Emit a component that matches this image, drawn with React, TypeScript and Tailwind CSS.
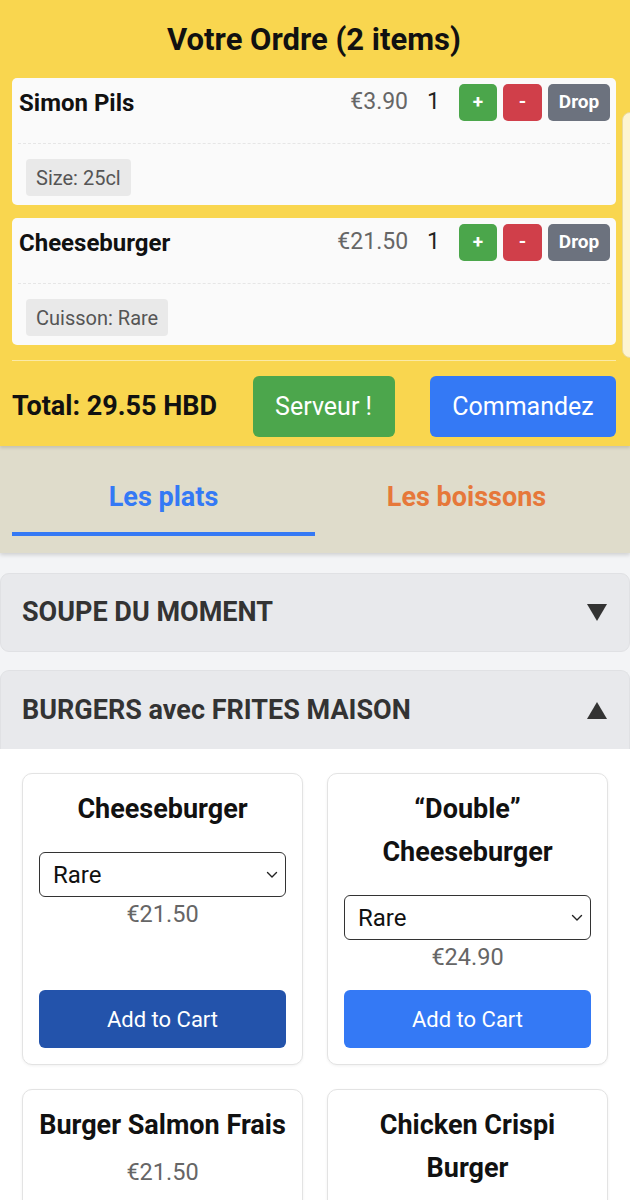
import React, { useState } from 'react';

type OrderItem = { name: string; price: string; qty: number; option: string };

const orderItems: OrderItem[] = [
  { name: 'Simon Pils', price: '€3.90', qty: 1, option: 'Size: 25cl' },
  { name: 'Cheeseburger', price: '€21.50', qty: 1, option: 'Cuisson: Rare' },
];

type Dish = { name: React.ReactNode; price: string; select?: boolean; active?: boolean };

const dishes: Dish[] = [
  { name: 'Cheeseburger', price: '€21.50', select: true, active: true },
  { name: <>“Double”<br />Cheeseburger</>, price: '€24.90', select: true },
  { name: 'Burger Salmon Frais', price: '€21.50' },
  { name: <>Chicken Crispi<br />Burger</>, price: '€21.50' },
];

const Chevron = () => (
  <svg className="pointer-events-none absolute right-[8px] top-1/2 -translate-y-1/2" width="12" height="8" viewBox="0 0 12 8" fill="none">
    <path d="M1.5 1.5 L6 6 L10.5 1.5" stroke="#222" strokeWidth="1.4" strokeLinecap="round" strokeLinejoin="round" />
  </svg>
);

const Triangle = ({ up }: { up?: boolean }) => (
  <svg width="20" height="17" viewBox="0 0 20 17">
    <path d={up ? 'M10 0 L20 17 L0 17 Z' : 'M0 0 L20 0 L10 17 Z'} fill="#333" />
  </svg>
);

const App: React.FC = () => {
  const [tab, setTab] = useState<'plats' | 'boissons'>('plats');

  return (
    <div className="relative min-h-[1200px] overflow-hidden bg-[#f3f4f6] text-[#111]" style={{ fontFamily: 'Roboto, "Noto Sans", sans-serif' }}>
      {/* Order panel */}
      <div className="relative z-10 bg-[#f9d64f] pb-[9px] pl-[12px] pr-[14px] shadow-[0_2px_3px_rgba(0,0,0,0.12)]">
        <h1 className="flex h-[78px] items-center justify-center pt-[2px] text-[31px] font-bold">Votre Ordre (2 items)</h1>

        <div className="flex flex-col gap-[13px]">
          {orderItems.map((item) => (
            <div key={item.name} className="rounded-[5px] bg-[#fafafa] px-[6px] pb-[9px] pt-[6px]">
              <div className="flex h-[37px] items-center">
                <span className="flex-1 pl-[1px] text-[24px] font-bold">{item.name}</span>
                <span className="text-[23px] text-[#666]">{item.price}</span>
                <span className="ml-[19px] mr-[19px] text-[23px] text-[#222]">{item.qty}</span>
                <div className="flex gap-[6px]">
                  <button className="flex h-[37px] w-[38px] items-center justify-center rounded-[5px] bg-[#4ba64b] text-[19px] font-bold text-white">+</button>
                  <button className="flex h-[37px] w-[39px] items-center justify-center rounded-[5px] bg-[#d03f4a] text-[19px] font-bold text-white">-</button>
                  <button className="flex h-[37px] w-[62px] items-center justify-center rounded-[5px] bg-[#6c727e] text-[19px] font-bold text-white">Drop</button>
                </div>
              </div>
              <div className="mt-[22px] border-t border-dashed border-[#e6e6e6]" />
              <div className="ml-[8px] mt-[15px] inline-flex h-[37px] items-center rounded-[4px] bg-[#e9e9e9] px-[10px] text-[20px] text-[#555]">
                {item.option}
              </div>
            </div>
          ))}
        </div>

        <div className="mt-[15px] border-t border-[#fbeaa6]" />

        <div className="flex items-center justify-between pt-[15px]">
          <span className="text-[27px] font-bold">Total: 29.55 HBD</span>
          <button className="h-[61px] w-[142px] rounded-[6px] bg-[#4ca64c] text-[25px] text-white">Serveur !</button>
          <button className="h-[61px] w-[186px] rounded-[6px] bg-[#3479f5] text-[25px] text-white">Commandez</button>
        </div>

        {/* partially visible side panel */}
        <div className="absolute right-[-20px] top-[112px] h-[246px] w-[28px] rounded-[8px] border border-[#e8d9a0] bg-[#fdf4d2]" />
      </div>

      {/* Tabs */}
      <div className="relative z-[5] flex bg-[#dfdccb] px-[12px] shadow-[0_2px_4px_rgba(0,0,0,0.15)]">
        <button onClick={() => setTab('plats')} className="flex h-[107px] flex-1 flex-col items-center">
          <span className="mt-[35px] text-[27px] font-bold leading-[32px] text-[#3479f5]">Les plats</span>
          {tab === 'plats' && <span className="mt-[19px] h-[4px] w-full bg-[#3479f5]" />}
        </button>
        <button onClick={() => setTab('boissons')} className="flex h-[107px] flex-1 flex-col items-center">
          <span className="mt-[35px] text-[27px] font-bold leading-[32px] text-[#e6783a]">Les boissons</span>
          {tab === 'boissons' && <span className="mt-[19px] h-[4px] w-full bg-[#e6783a]" />}
        </button>
      </div>

      {/* Accordions */}
      <div className="pt-[20px]">
        <div className="flex h-[79px] items-center justify-between rounded-[9px] border border-[#e0e1e4] bg-[#e8e9ec] pl-[21px] pr-[22px]">
          <span className="text-[27px] font-bold text-[#333]">SOUPE DU MOMENT</span>
          <Triangle />
        </div>

        <div className="mt-[18px] flex h-[79px] items-center justify-between rounded-t-[9px] border border-b-0 border-[#e0e1e4] bg-[#e8e9ec] pl-[21px] pr-[22px]">
          <span className="text-[27px] font-bold text-[#333]">BURGERS avec FRITES MAISON</span>
          <Triangle up />
        </div>

        <div className="grid grid-cols-2 gap-x-[24px] gap-y-[24px] bg-white px-[22px] pb-[24px] pt-[24px]">
          {dishes.map((d, i) => (
            <div key={i} className="flex flex-col rounded-[10px] border border-[#e3e3e3] bg-white px-[16px] pb-[16px] pt-[14px] shadow-[0_1px_3px_rgba(0,0,0,0.06)]">
              <h3 className="text-center text-[27px] font-bold leading-[43px]">{d.name}</h3>
              {d.select && (
                <div className="relative mt-[21px]">
                  <select defaultValue="Rare" className="h-[45px] w-full appearance-none rounded-[6px] border-[1.5px] border-[#333] bg-white pl-[13px] text-[24px] text-[#111] outline-none">
                    <option>Rare</option>
                    <option>À point</option>
                    <option>Bien cuit</option>
                  </select>
                  <Chevron />
                </div>
              )}
              <div className={`text-center text-[23.5px] leading-[34px] text-[#666] ${d.select ? '' : 'mt-[8px]'}`}>{d.price}</div>
              <div className="mt-auto pt-[16px]">
                <button className={`h-[58px] w-full rounded-[6px] text-[22px] text-white ${d.active ? 'bg-[#2353ab]' : 'bg-[#3479f5]'}`}>
                  Add to Cart
                </button>
              </div>
            </div>
          ))}
        </div>
      </div>
    </div>
  );
};

export default App;
